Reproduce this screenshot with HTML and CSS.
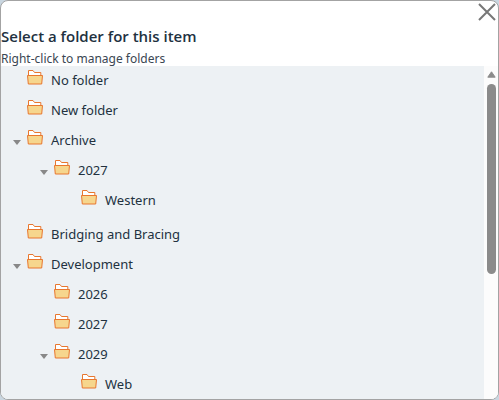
FILE: index.html
```html
<!DOCTYPE html>
<html lang="en">
<head>
    <meta charset="UTF-8">
    <meta name="viewport" content="width=device-width, initial-scale=1.0">
    <title>Select a folder</title>
    <link rel="stylesheet" href="styles.css">
</head>
<body>

    <!-- Shared icons -->
    <svg class="icon-defs" aria-hidden="true">
        <symbol id="folder" viewBox="0 0 16 15">
            <path d="M1.5 6V.5H6L7.5 2.5H13.8V6" fill="#fff" stroke="#e8772e"/>
            <path d="M.5 5.5H15.5L14.7 14H1.3Z" fill="#f6d68d" stroke="#e8772e"/>
        </symbol>
    </svg>

    <div class="dialog" role="dialog" aria-labelledby="dialogTitle">
        <div class="dialog-top">
            <button type="button" class="close-btn" aria-label="Close">
                <svg width="18" height="18" viewBox="0 0 18 18">
                    <path d="M1 1L17 17M17 1L1 17" fill="none" stroke="#777" stroke-width="2"/>
                </svg>
            </button>
        </div>
        <h2 id="dialogTitle">Select a folder for this item</h2>
        <p class="hint">Right-click to manage folders</p>

        <div class="tree-box">
            <ul class="tree">
                <li>
                    <div class="row"><svg class="folder"><use href="#folder"/></svg><span>No folder</span></div>
                </li>
                <li>
                    <div class="row"><svg class="folder"><use href="#folder"/></svg><span>New folder</span></div>
                </li>
                <li>
                    <div class="row"><button type="button" class="toggle" aria-label="Collapse Archive"></button><svg class="folder"><use href="#folder"/></svg><span>Archive</span></div>
                    <ul>
                        <li>
                            <div class="row"><button type="button" class="toggle" aria-label="Collapse 2027"></button><svg class="folder"><use href="#folder"/></svg><span>2027</span></div>
                            <ul>
                                <li>
                                    <div class="row"><svg class="folder"><use href="#folder"/></svg><span>Western</span></div>
                                </li>
                            </ul>
                        </li>
                    </ul>
                </li>
                <li>
                    <div class="row"><svg class="folder"><use href="#folder"/></svg><span>Bridging and Bracing</span></div>
                </li>
                <li>
                    <div class="row"><button type="button" class="toggle" aria-label="Collapse Development"></button><svg class="folder"><use href="#folder"/></svg><span>Development</span></div>
                    <ul>
                        <li>
                            <div class="row"><svg class="folder"><use href="#folder"/></svg><span>2026</span></div>
                        </li>
                        <li>
                            <div class="row"><svg class="folder"><use href="#folder"/></svg><span>2027</span></div>
                        </li>
                        <li>
                            <div class="row"><button type="button" class="toggle" aria-label="Collapse 2029"></button><svg class="folder"><use href="#folder"/></svg><span>2029</span></div>
                            <ul>
                                <li>
                                    <div class="row"><svg class="folder"><use href="#folder"/></svg><span>Web</span></div>
                                </li>
                            </ul>
                        </li>
                    </ul>
                </li>
            </ul>
            <div class="scrollbar" aria-hidden="true">
                <svg width="9" height="7" viewBox="0 0 9 7">
                    <path d="M4.5 .8L8.2 6.2H.8Z" fill="#8b8b8b" stroke="#8b8b8b" stroke-linejoin="round"/>
                </svg>
                <div class="thumb"></div>
            </div>
        </div>
    </div>

</body>
</html>
```
FILE: styles.css
```css
* {
    margin: 0;
    padding: 0;
    box-sizing: border-box;
}

body {
    height: 100vh;
    background-color: #c9d6e0;
    font-family: "Segoe UI", "Noto Sans", sans-serif;
    font-size: 13px;
    color: #22313f;
}

button {
    border: none;
    background: none;
    cursor: pointer;
}

ul {
    list-style: none;
}

.icon-defs {
    display: none;
}

.dialog {
    display: flex;
    flex-direction: column;
    height: 100%;
    background-color: #fff;
    border: 1px solid #a3a3a3;
    border-radius: 8px;
    overflow: hidden;
}

.dialog-top {
    display: flex;
    justify-content: flex-end;
    height: 25px;
    padding: 2px 2px 0 0;
}

.close-btn {
    width: 18px;
    height: 18px;
}

.close-btn svg {
    display: block;
}

h2 {
    font-family: "Segoe UI", "Open Sans", sans-serif;
    font-size: 15px;
    font-weight: 600;
    line-height: 20px;
}

.hint {
    padding-top: 6px;
    font-size: 12px;
    line-height: 14px;
    color: #3a4652;
}

.tree-box {
    display: flex;
    flex: 1;
    min-height: 0;
    background-color: #edf1f4;
}

.tree {
    flex: 1;
    overflow: hidden;
}

.tree ul {
    padding-left: 27px;
}

.tree > li > ul {
    margin-bottom: 4px;
}

.row {
    display: flex;
    padding-left: 26px;
    height: 30px;
    line-height: 28px;
}

.folder {
    flex: none;
    width: 16px;
    height: 15px;
    margin: 4px 8px 0 0;
}

/* sits in the indent left of the folder */
.toggle {
    width: 8px;
    height: 5px;
    margin: 14px 6px 0 -14px;
    background-color: #888;
    clip-path: polygon(0 0, 100% 0, 50% 100%);
}

.scrollbar {
    display: flex;
    flex-direction: column;
    align-items: center;
    width: 14px;
    padding-top: 5px;
    background-color: #fcfcfc;
}

.thumb {
    width: 9px;
    height: 58%;
    margin-top: 6px;
    border-radius: 5px;
    background-color: #8b8b8b;
}
```
